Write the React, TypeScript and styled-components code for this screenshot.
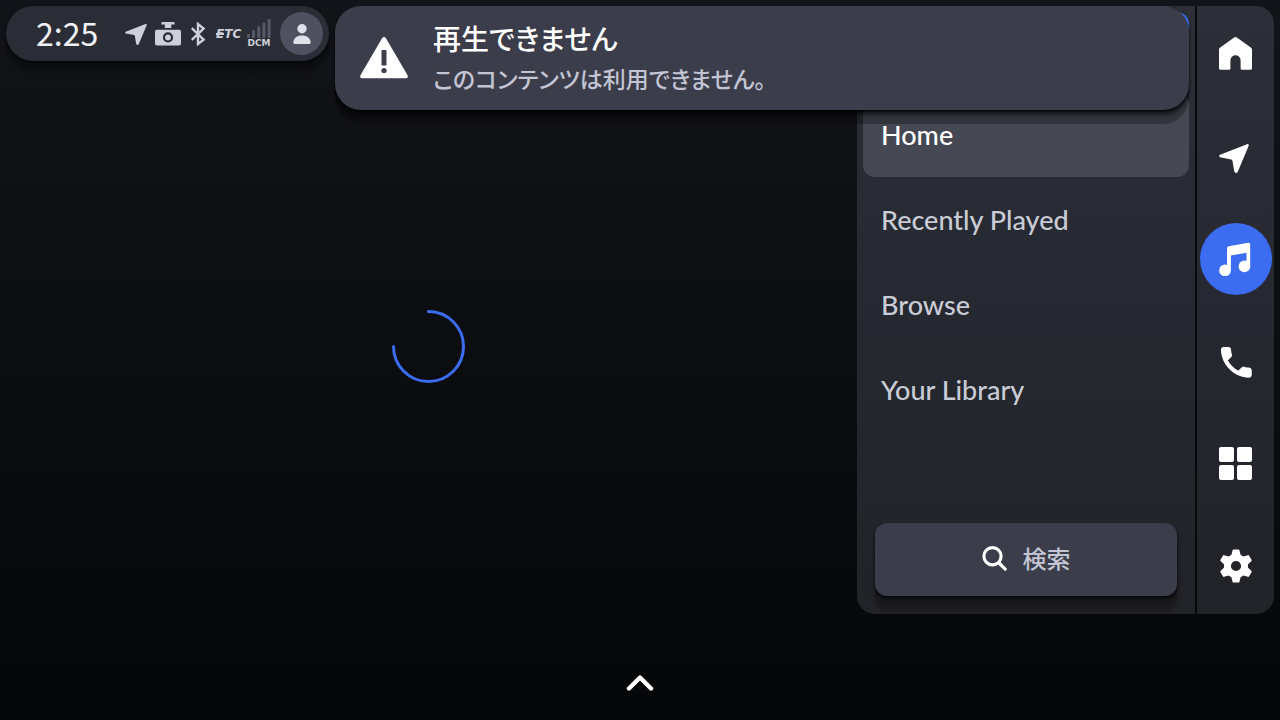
import React from "react";
import styled, { createGlobalStyle } from "styled-components";

const GlobalStyle = createGlobalStyle`
  *, *::before, *::after { box-sizing: border-box; }
  body {
    margin: 0;
    background: #060709;
    color: #fff;
    font-family: Lato, "Noto Sans CJK JP", sans-serif;
  }
  button { border: 0; padding: 0; background: none; color: inherit; font: inherit; cursor: pointer; }
  svg { display: block; flex: none; }
  h1, p { margin: 0; }
`;

const Screen = styled.div`
  position: relative;
  min-height: 100vh;
  display: flex;
  flex-direction: column;
  padding: 6px 6px 0 0;
  background: linear-gradient(#121419, #0c0d11 50%, #050608);
`;

const Main = styled.main`
  flex: 1;
  display: flex;
`;

const Content = styled.section`
  flex: 1;
  display: flex;
  flex-direction: column;
`;

const StatusBar = styled.header`
  align-self: flex-start;
  display: flex;
  align-items: center;
  height: 55px;
  margin-left: 6px;
  padding: 0 6px 0 30px;
  border-radius: 28px;
  background: #2b2d36;
  box-shadow: 0 2px 4px #000a, 0 12px 2px #0003;
  color: #cdd0da;
`;

const Clock = styled.time`
  width: 89px;
  padding-bottom: 4px;
  font: 400 32px/40px "Noto Sans CJK JP", sans-serif;
  color: #f1f2f6;
`;

const StatusIcons = styled.div`
  display: flex;
  align-items: center;
  gap: 8px;
`;

const Etc = styled.span`
  position: relative;
  width: 24px;
  padding-left: 1px;
  font: italic 700 12px/16px "DejaVu Sans", sans-serif;

  &::before {
    content: "";
    position: absolute;
    left: 1px;
    top: 7px;
    width: 8px;
    height: 2px;
    background: currentColor;
  }
`;

const Signal = styled.span`
  display: flex;
  flex-direction: column;
  align-items: center;
  width: 24px;
  font: 700 9px/10px "DejaVu Sans", sans-serif;
`;

const Avatar = styled.button`
  display: grid;
  place-items: center;
  width: 43px;
  height: 43px;
  margin-left: 9px;
  border-radius: 50%;
  background: #4f5160;
  color: #dfe1ea;
`;

const Loading = styled.div`
  flex: 1;
  display: grid;
  place-items: center;
  padding-top: 18px;
`;

const Panel = styled.aside`
  display: flex;
  width: 417px;
  border-radius: 18px;
  overflow: hidden;
  background: linear-gradient(#2c2f38, #252830 55%, #222328);
`;

const Menu = styled.nav`
  flex: 1;
  display: flex;
  flex-direction: column;
  padding: 6px 6px 18px;
`;

const SourceButton = styled.button`
  height: 74px;
  margin-bottom: 6px;
  border: 3px solid #3c6df0;
  border-radius: 12px;
`;

const MenuItem = styled.button<{ $active?: boolean }>`
  height: 85px;
  padding: 0 18px;
  border-radius: 12px;
  text-align: left;
  font-size: 27px;
  line-height: 32px;
  font-weight: 500;
  background: ${(p) => (p.$active ? "#454752" : "transparent")};
  color: ${(p) => (p.$active ? "#fff" : "#c9ccd6")};
`;

const SearchButton = styled.button`
  display: flex;
  align-items: center;
  justify-content: center;
  gap: 16px;
  height: 73px;
  margin: auto 12px 0;
  padding-bottom: 3px;
  border-radius: 12px;
  background: #3c3d4a;
  box-shadow: 0 2px 3px #000b, 0 6px 6px #0004, 0 16px 1px #0003;
  font: 500 24px/32px "Noto Sans CJK JP", sans-serif;
  color: #c3c5d4;

  svg { color: #fff; }
`;

const Rail = styled.nav`
  display: flex;
  flex-direction: column;
  align-items: center;
  justify-content: space-between;
  width: 79px;
  padding: 12px 0;
  border-left: 2px solid #08090b;
`;

const RailButton = styled.button<{ $active?: boolean }>`
  display: grid;
  place-items: center;
  width: 72px;
  height: 72px;
  border-radius: 50%;
  background: ${(p) => (p.$active ? "#3c6df0" : "transparent")};
`;

const Toast = styled.div`
  position: absolute;
  top: 6px;
  left: 335px;
  right: 91px;
  display: flex;
  align-items: center;
  gap: 25px;
  height: 104px;
  padding: 0 25px;
  border-radius: 26px;
  background: #3c3d4a;
  box-shadow: 0 2px 3px #000c, 0 6px 3px #0005, 0 14px 1px #0004;
  font-feature-settings: "palt";
`;

const ToastTitle = styled.h1`
  font-family: "Noto Sans CJK JP", sans-serif;
  font-size: 28px;
  line-height: 40px;
  font-weight: 500;
`;

const ToastText = styled.p`
  font-family: "Noto Sans CJK JP", sans-serif;
  font-size: 23px;
  line-height: 40px;
  font-weight: 500;
  color: #c3c5d4;
`;

const Footer = styled.footer`
  display: flex;
  justify-content: center;
  height: 106px;
  padding: 53px 0 0 6px;
`;

const ExpandButton = styled.button`
  display: grid;
  place-items: center;
  width: 60px;
  height: 32px;
`;

const arrowPath =
  "M28 1.2 1 11.8Q-.6 13 1 14.3L12.2 16.5Q13.3 16.8 13.5 17.9L15.3 28.6Q15.8 29.9 17 29.9 18.2 29.9 18.8 28.7L29.6 3Q30.1.6 28 1.2Z";

const LocationIcon = () => (
  <svg width="22" height="22" viewBox="0 0 30 30" fill="currentColor">
    <path d={arrowPath} />
  </svg>
);

const NavigationIcon = () => (
  <svg width="33" height="33" viewBox="0 -3 33 33" fill="currentColor">
    <path d={arrowPath} />
  </svg>
);

const CameraIcon = () => (
  <svg width="26" height="24" viewBox="0 0 26 24" fill="currentColor">
    <path d="M6.5 0h13v2.6h-3.2v3.4H9.8V2.6H6.5z" />
    <path fillRule="evenodd" d="M2 7.7h22a2 2 0 0 1 2 2v11.8a2 2 0 0 1-2 2H2a2 2 0 0 1-2-2V9.7a2 2 0 0 1 2-2Zm11 2.6a5.1 5.1 0 1 0 0 10.2 5.1 5.1 0 0 0 0-10.2Z" />
    <circle cx="13" cy="15.4" r="2.9" />
  </svg>
);

const BluetoothIcon = () => (
  <svg width="18" height="24" viewBox="-1 0 18 24" fill="none" stroke="currentColor" strokeWidth="2.4">
    <path d="M1.8 6.2 13.6 17.6 8 22V2l5.6 4.6L1.8 17.8" />
  </svg>
);

const SignalBars = () => (
  <svg width="24" height="19" viewBox="0 0 24 19" fill="#575a66">
    <rect x="0" y="15" width="3" height="4" rx="1" />
    <rect x="5" y="11" width="3" height="8" rx="1" />
    <rect x="10.3" y="7.3" width="3" height="11.7" rx="1" />
    <rect x="15.4" y="3.5" width="3" height="15.5" rx="1" />
    <rect x="20.6" y="0" width="3" height="19" rx="1" />
  </svg>
);

const PersonIcon = () => (
  <svg width="18" height="20" viewBox="0 0 18 20" fill="currentColor">
    <circle cx="9" cy="4.8" r="4.7" />
    <path d="M.3 18.6C.3 14 4 11.4 9 11.4s8.7 2.6 8.7 7.2q0 1.4-1.4 1.4H1.7Q.3 20 .3 18.6Z" />
  </svg>
);

const WarningIcon = () => (
  <svg width="48" height="42" viewBox="0 0 48 42">
    <path d="M21.9 1.5Q24-1.4 26.1 1.5L47.4 38Q49 41.3 45.5 41.3H2.5Q-1 41.3.6 38Z" fill="#fff" />
    <rect x="21.5" y="13" width="5" height="15.5" rx=".8" fill="#3c3d4a" />
    <circle cx="24" cy="33.5" r="2.6" fill="#3c3d4a" />
  </svg>
);

const Spinner = () => (
  <svg width="73" height="73" viewBox="0 0 73 73" fill="none" stroke="#3c6df0" strokeWidth="3" strokeLinecap="round" role="img" aria-label="読み込み中">
    <path d="M36.5 1.5a35 35 0 1 1-35 35" />
  </svg>
);

const SearchIcon = () => (
  <svg width="25" height="25" viewBox="0 0 25 25" fill="none" stroke="currentColor" strokeWidth="3.2" strokeLinecap="round">
    <circle cx="10.5" cy="10.3" r="8.6" />
    <path d="m17 17 6.2 6.2" />
  </svg>
);

const HomeIcon = () => (
  <svg width="33" height="34" viewBox="0 0 33 34" fill="currentColor">
    <path d="M14.8.7Q16.5-.5 18.2.7L31.8 10.4Q33 11.3 33 12.6V31.3Q33 32.8 31.5 32.8H23Q21.6 32.8 21.6 31.4V23.3A5.1 5.1 0 0 0 11.4 23.3V31.4Q11.4 32.8 10 32.8H1.5Q0 32.8 0 31.3V12.6Q0 11.3 1.2 10.4Z" />
  </svg>
);

const MusicIcon = () => (
  <svg width="34" height="34" viewBox="0 0 34 34" fill="currentColor">
    <path d="M8 6.2Q8 4.5 9.7 4.2L29.3.8Q31.2.5 31.2 2.4V24.4H27.5V10.7L11.9 13.4V28.5H8Z" />
    <circle cx="6" cy="28.4" r="5.8" />
    <circle cx="25.4" cy="24.4" r="5.8" />
  </svg>
);

const PhoneIcon = () => (
  <svg width="33" height="33" viewBox="1.5 1.5 20 20" fill="currentColor" stroke="currentColor" strokeWidth=".6" strokeLinejoin="round">
    <path d="M6.62 10.79c1.44 2.83 3.76 5.14 6.59 6.59l2.2-2.2c.27-.27.67-.36 1.02-.24 1.12.37 2.33.57 3.57.57.55 0 1 .45 1 1V20c0 .55-.45 1-1 1-9.39 0-17-7.61-17-17 0-.55.45-1 1-1h3.5c.55 0 1 .45 1 1 0 1.25.2 2.45.57 3.57.11.35.03.74-.25 1.02l-2.2 2.2z" />
  </svg>
);

const AppsIcon = () => (
  <svg width="33" height="33" viewBox="0 0 33 33" fill="currentColor">
    <rect width="15" height="15" rx="2" />
    <rect x="18" width="15" height="15" rx="2" />
    <rect y="18" width="15" height="15" rx="2" />
    <rect x="18" y="18" width="15" height="15" rx="2" />
  </svg>
);

const GearIcon = () => (
  <svg width="34" height="34" viewBox="-17 -17 34 34" fill="currentColor" stroke="currentColor">
    <circle r="8.6" fill="none" strokeWidth="7" />
    {[0, 60, 120, 180, 240, 300].map((angle) => (
      <path key={angle} transform={`rotate(${angle})`} d="M-2.4-15.4H2.4L3.5-11H-3.5Z" strokeWidth="2.2" strokeLinejoin="round" />
    ))}
  </svg>
);

const ChevronUpIcon = () => (
  <svg width="28" height="18" viewBox="0 0 28 18" fill="none" stroke="#fff" strokeWidth="4.4" strokeLinecap="round" strokeLinejoin="round">
    <path d="M3 14.5 14 3.5 25 14.5" />
  </svg>
);

const menuItems = ["Home", "Recently Played", "Browse", "Your Library"];

const railItems = [
  { label: "ホーム", icon: <HomeIcon /> },
  { label: "ナビ", icon: <NavigationIcon /> },
  { label: "オーディオ", icon: <MusicIcon /> },
  { label: "電話", icon: <PhoneIcon /> },
  { label: "アプリ", icon: <AppsIcon /> },
  { label: "設定", icon: <GearIcon /> },
];

export default function App() {
  return (
    <>
      <GlobalStyle />
      <Screen>
        <Main>
          <Content>
            <StatusBar>
              <Clock>2:25</Clock>
              <StatusIcons>
                <LocationIcon />
                <CameraIcon />
                <BluetoothIcon />
                <Etc>ETC</Etc>
                <Signal>
                  <SignalBars />
                  DCM
                </Signal>
              </StatusIcons>
              <Avatar type="button" aria-label="ユーザー">
                <PersonIcon />
              </Avatar>
            </StatusBar>
            <Loading>
              <Spinner />
            </Loading>
          </Content>
          <Panel>
            <Menu>
              <SourceButton type="button" aria-label="ソース" />
              {menuItems.map((item) => (
                <MenuItem key={item} type="button" $active={item === "Home"}>
                  {item}
                </MenuItem>
              ))}
              <SearchButton type="button">
                <SearchIcon />
                検索
              </SearchButton>
            </Menu>
            <Rail>
              {railItems.map(({ label, icon }) => (
                <RailButton key={label} type="button" aria-label={label} $active={label === "オーディオ"}>
                  {icon}
                </RailButton>
              ))}
            </Rail>
          </Panel>
        </Main>
        <Footer>
          <ExpandButton type="button" aria-label="開く">
            <ChevronUpIcon />
          </ExpandButton>
        </Footer>
        <Toast role="alert">
          <WarningIcon />
          <div>
            <ToastTitle>再生できません</ToastTitle>
            <ToastText>このコンテンツは利用できません。</ToastText>
          </div>
        </Toast>
      </Screen>
    </>
  );
}
